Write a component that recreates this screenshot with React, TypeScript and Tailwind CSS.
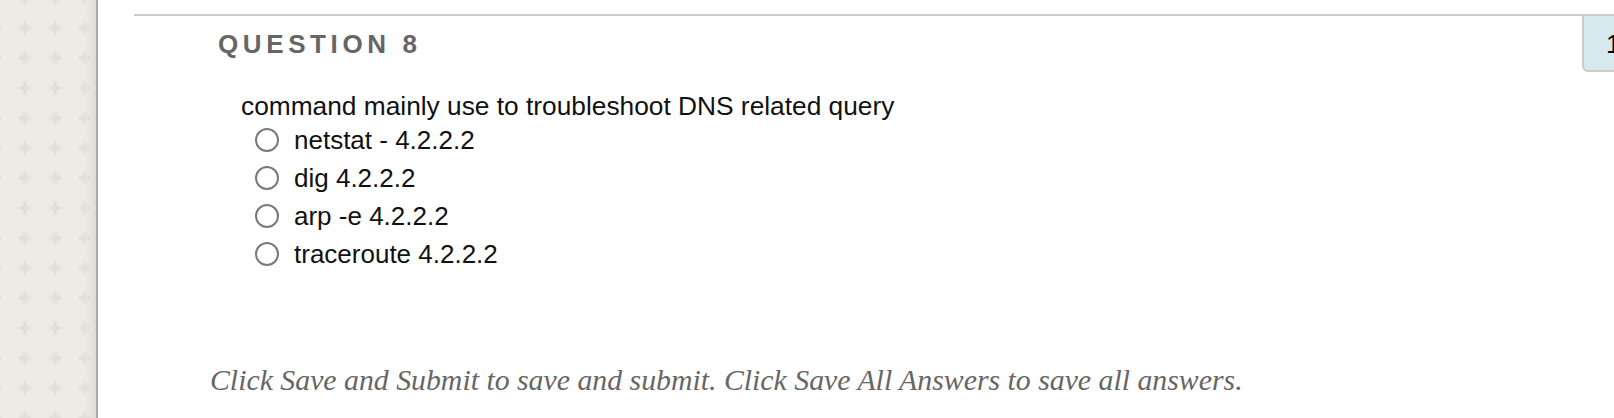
const options = ['netstat - 4.2.2.2', 'dig 4.2.2.2', 'arp -e 4.2.2.2', 'traceroute 4.2.2.2']

const Sidebar = () => (
  <div className="relative w-[98px] h-full shrink-0 bg-[#eeebe5] border-r-2 border-[#ababab]">
    <svg className="w-full h-full" width="96" height="418">
      <defs>
        <filter id="soft">
          <feGaussianBlur stdDeviation="0.8" />
        </filter>
        <pattern id="plus" x="10" y="-17" width="30" height="30" patternUnits="userSpaceOnUse">
          <g fill="#e2dfd8" filter="url(#soft)">
            <rect x="13" y="9" width="4" height="12" />
            <rect x="9" y="13" width="12" height="4" />
          </g>
        </pattern>
        <linearGradient id="edge" x1="0" x2="1" y1="0" y2="0">
          <stop offset="0" stopColor="#e6e3dc" stopOpacity="0" />
          <stop offset="1" stopColor="#dedbd3" stopOpacity="1" />
        </linearGradient>
      </defs>
      <rect width="100%" height="100%" fill="url(#plus)" />
      <rect x="84" width="12" height="100%" fill="url(#edge)" />
    </svg>
  </div>
)

const Radio = () => (
  <span className="w-[24px] h-[24px] rounded-full border-2 border-[#7a7a7a] bg-white shrink-0" />
)

export default function App() {
  return (
    <div className="flex w-full h-[418px] bg-white overflow-hidden font-['Liberation_Sans',Arial,sans-serif]">
      <Sidebar />
      <div className="flex-1 flex pl-[36px] pt-[14px] min-w-0">
        <div className="flex-1 flex flex-col border-t-2 border-[#cbcbcb] min-w-0">
          <h2 className="mt-[14px] ml-[84px] text-[26px] leading-[28px] font-bold tracking-[4.6px] text-[#666666]">
            QUESTION 8
          </h2>
          <p className="mt-[34px] ml-[107px] text-[26.3px] leading-[28px] text-[#111111]">
            command mainly use to troubleshoot DNS related query
          </p>
          <ul className="mt-[1px] ml-[121px] flex flex-col">
            {options.map((o) => (
              <li key={o} className="h-[38px] flex items-center gap-[15px] text-[26px] text-[#111111]">
                <Radio />
                <span>{o}</span>
              </li>
            ))}
          </ul>
          <p className="mt-[90px] ml-[76px] text-[29.8px] leading-[34px] italic text-[#666666] font-['Liberation_Serif',Georgia,serif] whitespace-nowrap">
            Click Save and Submit to save and submit. Click Save All Answers to save all answers.
          </p>
        </div>
        <div className="w-[32px] h-[58px] shrink-0 bg-[#d6e9ee] border-l-2 border-t-2 border-b-2 border-[#cbcbcb] rounded-bl-[6px] overflow-hidden">
          <div className="pl-[22px] pt-[15px] text-[26px] leading-[26px] text-black whitespace-nowrap">1 points</div>
        </div>
      </div>
    </div>
  )
}
